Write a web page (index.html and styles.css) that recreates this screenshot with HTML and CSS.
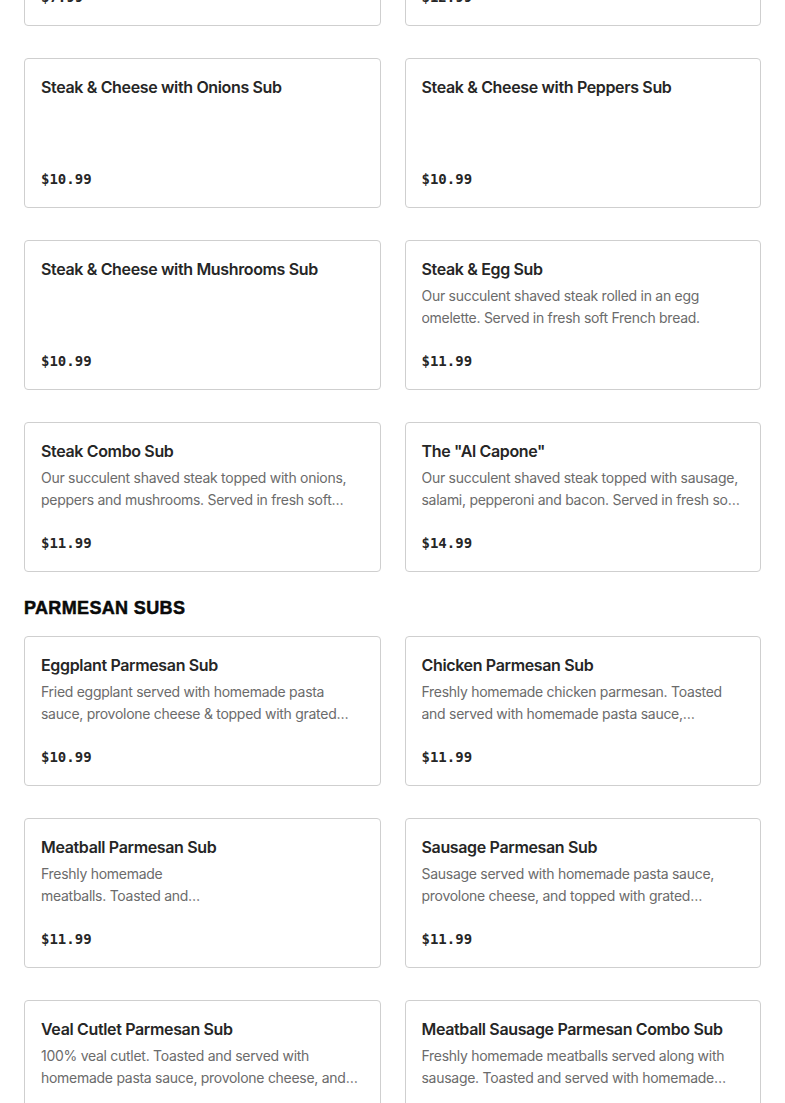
FILE: index.html
```html
<!DOCTYPE html>
<html>
<head>
<meta charset="utf-8">
<link rel="stylesheet" href="styles.css">
</head>
<body>
<main class="menu">
  <section class="grid first">
    <div class="card"><h3 class="title">Steak &amp; Cheese Sub</h3><p class="desc"></p><div class="price">$7.99</div></div>
    <div class="card"><h3 class="title">Steak &amp; Cheese Deluxe Sub</h3><p class="desc"></p><div class="price">$12.99</div></div>
    <div class="card"><h3 class="title">Steak &amp; Cheese with Onions Sub</h3><p class="desc"></p><div class="price">$10.99</div></div>
    <div class="card"><h3 class="title">Steak &amp; Cheese with Peppers Sub</h3><p class="desc"></p><div class="price">$10.99</div></div>
    <div class="card"><h3 class="title">Steak &amp; Cheese with Mushrooms Sub</h3><p class="desc"></p><div class="price">$10.99</div></div>
    <div class="card"><h3 class="title">Steak &amp; Egg Sub</h3><p class="desc">Our succulent shaved steak rolled in an egg omelette. Served in fresh soft French bread.</p><div class="price">$11.99</div></div>
    <div class="card"><h3 class="title">Steak Combo Sub</h3><p class="desc">Our succulent shaved steak topped with onions, peppers and mushrooms. Served in fresh soft French bread.</p><div class="price">$11.99</div></div>
    <div class="card"><h3 class="title">The "Al Capone"</h3><p class="desc">Our succulent shaved steak topped with sausage, salami, pepperoni and bacon. Served in fresh soft French bread.</p><div class="price">$14.99</div></div>
  </section>
  <h2 class="section-title">PARMESAN SUBS</h2>
  <section class="grid">
    <div class="card"><h3 class="title">Eggplant Parmesan Sub</h3><p class="desc">Fried eggplant served with homemade pasta sauce, provolone cheese &amp; topped with grated parmesan cheese.</p><div class="price">$10.99</div></div>
    <div class="card"><h3 class="title">Chicken Parmesan Sub</h3><p class="desc">Freshly homemade chicken parmesan. Toasted and served with homemade pasta sauce, provolone cheese and grated parmesan.</p><div class="price">$11.99</div></div>
    <div class="card"><h3 class="title">Meatball Parmesan Sub</h3><p class="desc">Freshly homemade<br>meatballs. Toasted and<br>served with homemade pasta sauce.</p><div class="price">$11.99</div></div>
    <div class="card"><h3 class="title">Sausage Parmesan Sub</h3><p class="desc">Sausage served with homemade pasta sauce, provolone cheese, and topped with grated parmesan cheese.</p><div class="price">$11.99</div></div>
    <div class="card"><h3 class="title">Veal Cutlet Parmesan Sub</h3><p class="desc">100% veal cutlet. Toasted and served with homemade pasta sauce, provolone cheese, and grated parmesan.</p><div class="price">$12.99</div></div>
    <div class="card"><h3 class="title">Meatball Sausage Parmesan Combo Sub</h3><p class="desc">Freshly homemade meatballs served along with sausage. Toasted and served with homemade pasta sauce.</p><div class="price">$12.99</div></div>
  </section>
</main>
</body>
</html>
```

FILE: styles.css
```css
html, body {
  margin: 0;
  padding: 0;
  background: #fff;
  overflow: hidden;
}
body {
  font-family: "Inter", "Liberation Sans", Arial, sans-serif;
  color: #262626;
}
.menu {
  padding: 0 24px;
  margin-top: -124px;
}
.grid {
  display: grid;
  grid-template-columns: 1fr 1fr;
  column-gap: 24px;
  row-gap: 32px;
}
.card {
  box-sizing: border-box;
  height: 150px;
  border: 1px solid #cfcfcf;
  border-radius: 4px;
  padding: 16px;
  display: flex;
  flex-direction: column;
  background: #fff;
}
.title {
  margin: 0;
  font-size: 16px;
  line-height: 24px;
  font-weight: 600;
  color: #262626;
  letter-spacing: -0.35px;
}
.desc {
  margin: 4px 0 0;
  font-size: 14px;
  line-height: 22px;
  color: #6b6b6b;
  letter-spacing: -0.28px;
  display: -webkit-box;
  -webkit-line-clamp: 2;
  -webkit-box-orient: vertical;
  overflow: hidden;
}
.desc:empty {
  display: none;
}
.price {
  margin-top: auto;
  margin-bottom: 2px;
  font-family: "DejaVu Sans Mono", "Liberation Mono", monospace;
  font-weight: bold;
  font-size: 14px;
  line-height: 20px;
  color: #262626;
}
.section-title {
  margin: 24px 0 16px;
  font-family: "Liberation Sans", Arial, sans-serif;
  font-weight: 900;
  font-size: 18px;
  line-height: 24px;
  color: #0a0a0a;
  letter-spacing: 0.35px;
  -webkit-text-stroke: 0.5px #0a0a0a;
}
```
